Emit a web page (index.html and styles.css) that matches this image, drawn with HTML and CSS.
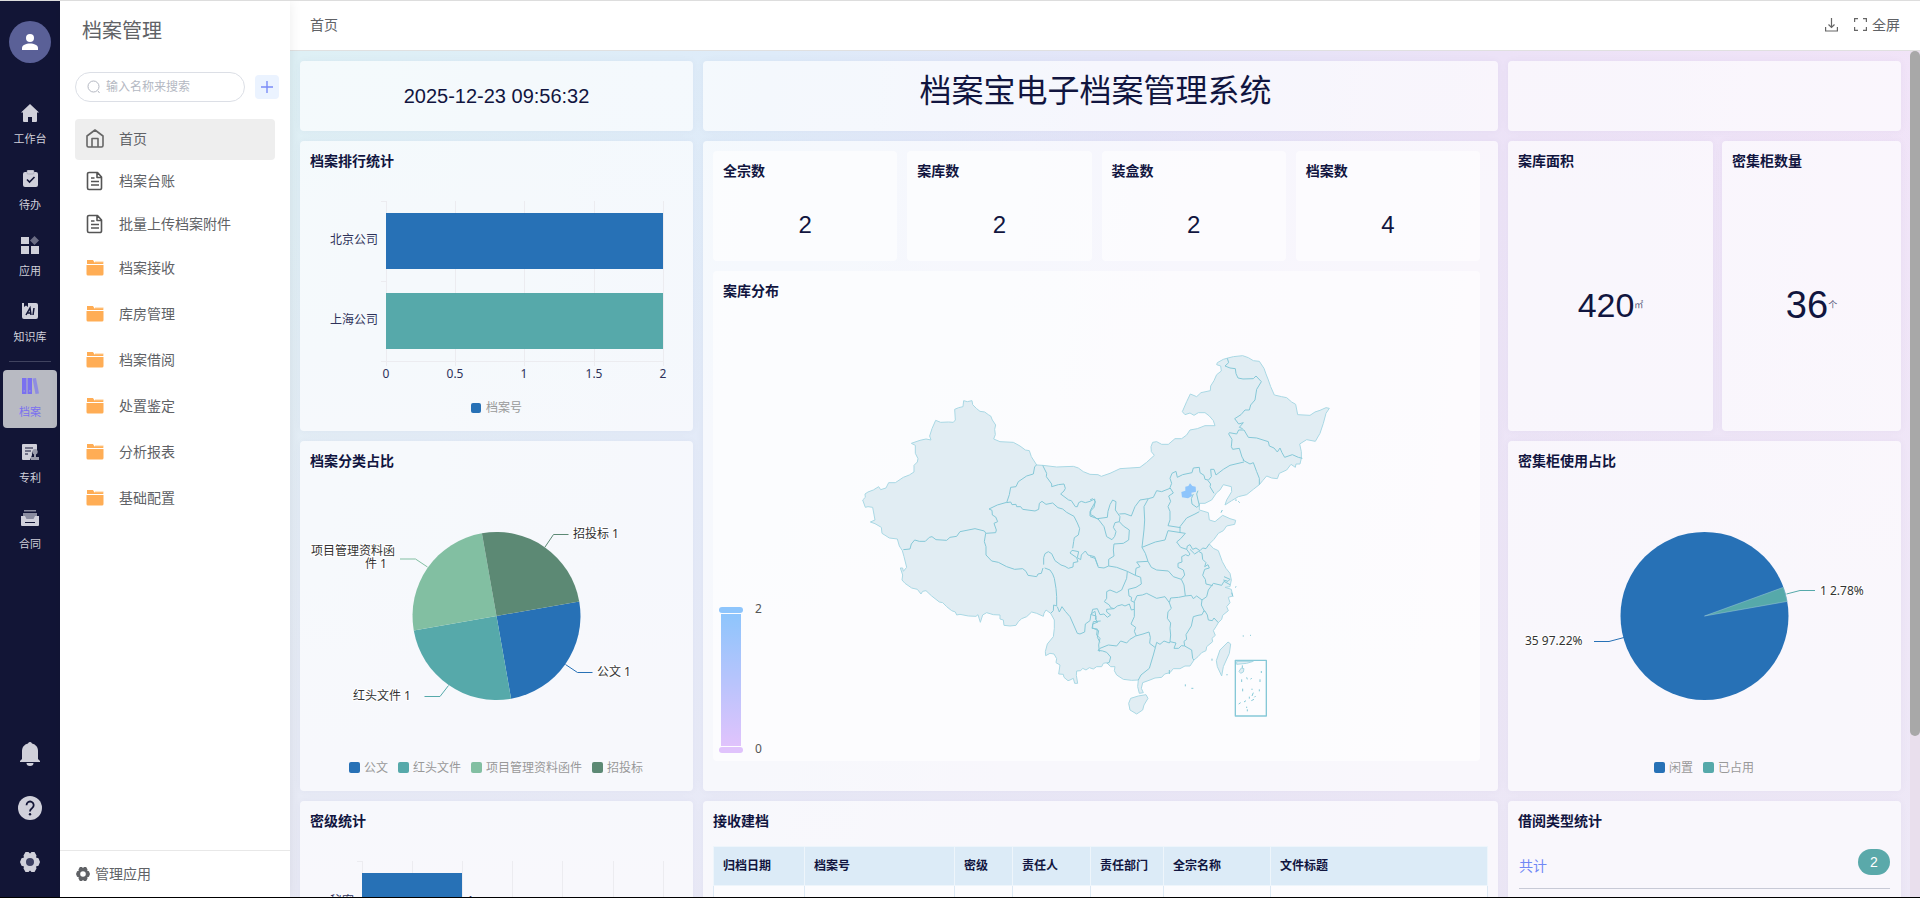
FILE: index.html
```html
<!DOCTYPE html>
<html lang="zh-CN">
<head>
<meta charset="utf-8">
<title>档案宝电子档案管理系统</title>
<link rel="stylesheet" href="styles.css">
</head>
<body>
<svg class="defs" aria-hidden="true">
  <symbol id="i-folder" viewBox="0 0 18 18"><path fill="#ffc98a" d="M9 2.500h8.500V6H9z"/><path fill="#ffad55" d="M1 1h6l1.500 2.500H17v2H1zM.5 5.500h17V15a1.500 1.500 0 0 1-1.500 1.500H2A1.500 1.500 0 0 1 .5 15z"/><path stroke="#fff" d="M0 5.500h18"/></symbol>
  <symbol id="i-doc" viewBox="0 0 18 20"><path fill="none" stroke="#555" stroke-width="1.600" stroke-linejoin="round" d="M3 1.500h8.500l4 4.500v11a1.500 1.500 0 0 1-1.500 1.500H3A1.500 1.500 0 0 1 1.500 17V3A1.500 1.500 0 0 1 3 1.500zM11 2v4.500h4.500M5 7h3.500M5 10.500h8M5 14h8"/></symbol>
  <symbol id="i-gear" viewBox="0 0 20 20"><path fill="currentColor" fill-rule="evenodd" d="M5.500 0h3L10 1.500 11.500 0h3l2 3.500-.5 2 2.500.700L20 10l-1.500 3.800-2.500.700.5 2-2 3.500h-3L10 18.500 8.500 20h-3l-2-3.500.5-2-2.500-.700L0 10l1.500-3.800L4 5.500l-.5-2zM10 6a4 4 0 1 0 0 8 4 4 0 0 0 0-8z"/></symbol>
</svg>
<div class="app">
  <nav class="rail" aria-label="主导航">
    <button class="avatar" aria-label="用户"><svg width="18" height="18" viewBox="0 0 18 18"><circle cx="9" cy="5" r="4" fill="#fff"/><path fill="#fff" d="M1 17v-2c0-3 4-4.500 8-4.500s8 1.500 8 4.500v2z"/></svg></button>
    <div class="rail-list">
      <a class="rail-item" href="#"><svg width="18" height="18" viewBox="0 0 18 18"><path fill="currentColor" d="M9 0l9 8.500h-2V17a1 1 0 0 1-1 1h-4v-5H7v5H3a1 1 0 0 1-1-1V8.500H0z"/></svg><span>工作台</span></a>
      <a class="rail-item" href="#"><svg width="18" height="18" viewBox="0 0 18 18"><rect x="2" y="2" width="15" height="15" rx="2" fill="currentColor"/><rect x="6" y="0" width="7" height="4" rx="1" fill="currentColor" stroke="#8a8c9f" stroke-width=".5"/><path d="M6 9.500l2.500 2.500 5-5" fill="none" stroke="#121536" stroke-width="1.600"/></svg><span>待办</span></a>
      <a class="rail-item" href="#"><svg width="18" height="18" viewBox="0 0 18 18"><path fill="currentColor" d="M0 1h8v7H0zM0 10h8v8H0zM10 10h8v8h-8z"/><path fill="#6b6d84" d="M13.500 0L18 4.500 13.500 9 9 4.500z"/></svg><span>应用</span></a>
      <a class="rail-item" href="#"><svg width="18" height="18" viewBox="0 0 18 18"><path fill="currentColor" d="M1 1h2v4l2-1.500L7 5V1h8a2 2 0 0 1 2 2v12a2 2 0 0 1-2 2H3a2 2 0 0 1-2-2z"/><path d="M5 13l4-7 1 7M6.500 11H10M13 6l-1 7" fill="none" stroke="#121536" stroke-width="1.500"/></svg><span>知识库</span></a>
      <hr class="rail-line">
      <a class="rail-item active" href="#"><svg width="18" height="18" viewBox="0 0 18 18"><path fill="currentColor" d="M1 1h4.500v16H1zM6.500 1H11v16H6.500z"/><path fill="#8f8de0" d="M11.500 1.500l3.500-.5 3 15.500-3.500.5z"/><path stroke="#b8bac2" d="M2.500 14h1.500M8 14h1.500" stroke-width=".8"/></svg><span>档案</span></a>
      <a class="rail-item" href="#"><svg width="18" height="18" viewBox="0 0 18 18"><path fill="currentColor" d="M2 1h13a1 1 0 0 1 1 1v5a4 4 0 0 0-5 5l-2 5H2a1 1 0 0 1-1-1V2a1 1 0 0 1 1-1z"/><path d="M4 5h8M4 8h6M4 11h3" stroke="#121536"/><path fill="#9a9bab" d="M14 6a2.800 2.800 0 0 1 1 5.400V14h3v3h-8v-3h3v-2.600A2.800 2.800 0 0 1 14 6z"/></svg><span>专利</span></a>
      <a class="rail-item" href="#"><svg width="18" height="18" viewBox="0 0 18 18"><path fill="#8a8c9f" d="M3 1h12v1.500H3zM2 4h14v6H2z"/><path fill="currentColor" d="M0 7h4l1.500 3h7L14 7h4v9a1 1 0 0 1-1 1H1a1 1 0 0 1-1-1z"/><path d="M4 13.500h10" stroke="#121536"/></svg><span>合同</span></a>
    </div>
    <div class="rail-tools">
      <button aria-label="通知"><svg width="20" height="24" viewBox="0 0 20 24"><path fill="currentColor" d="M10 0a2 2 0 0 1 2 1.500c4 1 6 4 6 7.500v8l2 2v1H0v-1l2-2V9c0-3.500 2-6.500 6-7.500A2 2 0 0 1 10 0zM6.500 21h7a3.500 3 0 0 1-7 0z"/></svg></button>
      <button aria-label="帮助"><svg width="24" height="24" viewBox="0 0 24 24"><circle cx="12" cy="12" r="12" fill="currentColor"/><path d="M8.500 9.200a3.600 3.600 0 1 1 5.500 3c-1.400.9-2 1.600-2 3.300" fill="none" stroke="#121536" stroke-width="1.800"/><circle cx="12" cy="18.300" r="1.200" fill="#121536"/></svg></button>
      <button aria-label="设置"><svg width="20" height="20"><circle cx="10" cy="10" r="6" fill="#3d4062"/><use href="#i-gear"/></svg></button>
    </div>
  </nav>

  <aside class="side">
    <h2 class="side-title">档案管理</h2>
    <div class="side-search">
      <label class="search-box"><svg width="14" height="14" viewBox="0 0 14 14"><path fill="none" stroke="#b4b8c2" d="M11 11l1.500 2M6.500 1a5.500 5.500 0 1 0 0 11 5.500 5.500 0 0 0 0-11z"/></svg><input type="text" placeholder="输入名称来搜索" aria-label="搜索"></label>
      <button class="add" aria-label="新增"><svg width="14" height="14" viewBox="0 0 14 14"><path d="M7 1v12M1 7h12" stroke="#7b8cf8" stroke-width="1.400"/></svg></button>
    </div>
    <ul class="menu">
      <li><a class="menu-item current" href="#"><svg width="18" height="19" viewBox="0 0 18 19"><path fill="none" stroke="#666" stroke-width="1.600" stroke-linejoin="round" d="M1 7l8-6 8 6v9.500a1.500 1.500 0 0 1-1.500 1.500h-13A1.500 1.500 0 0 1 1 16.500zM6 18V9.500h6V18"/></svg>首页</a></li>
      <li><a class="menu-item page" href="#"><svg width="18" height="20"><use href="#i-doc"/></svg>档案台账</a></li>
      <li><a class="menu-item page" href="#"><svg width="18" height="20"><use href="#i-doc"/></svg>批量上传档案附件</a></li>
      <li><a class="menu-item" href="#"><svg width="18" height="18"><use href="#i-folder"/></svg>档案接收</a></li>
      <li><a class="menu-item" href="#"><svg width="18" height="18"><use href="#i-folder"/></svg>库房管理</a></li>
      <li><a class="menu-item" href="#"><svg width="18" height="18"><use href="#i-folder"/></svg>档案借阅</a></li>
      <li><a class="menu-item" href="#"><svg width="18" height="18"><use href="#i-folder"/></svg>处置鉴定</a></li>
      <li><a class="menu-item" href="#"><svg width="18" height="18"><use href="#i-folder"/></svg>分析报表</a></li>
      <li><a class="menu-item" href="#"><svg width="18" height="18"><use href="#i-folder"/></svg>基础配置</a></li>
    </ul>
    <button class="side-foot"><svg width="14" height="14"><use href="#i-gear"/></svg>管理应用</button>
  </aside>

  <main class="main">
    <header class="top">
      <span>首页</span>
      <div class="top-tools">
        <button aria-label="下载"><svg width="13" height="14" viewBox="0 0 13 14"><path fill="none" stroke="#666" stroke-width="1.200" d="M6.500 0v9M3.500 6.500l3 3 3-3M.6 9v4h11.800V9"/></svg></button>
        <button><svg width="13" height="13" viewBox="0 0 13 13"><path fill="none" stroke="#666" stroke-width="1.200" d="M.6 4V.6H4M9 .6h3.400V4M12.400 9v3.400H9M4 12.400H.6V9"/></svg>全屏</button>
      </div>
    </header>
    <div class="scroller">
    <div class="board">
      <section class="card clock">2025-12-23 09:56:32</section>
      <section class="card headline"><h1>档案宝电子档案管理系统</h1></section>
      <section class="card"></section>

      <section class="card">
        <h3>档案排行统计</h3>
        <svg class="chart" viewBox="0 0 393 260" role="img" aria-label="档案排行统计">
          <path class="axis" d="M86.500 30v165M155.500 30v165M224.500 30v165M294.500 30v165M363.500 30v165M81 30.500h5M81 110.500h5M81 190.500h282"/>
          <path fill="#2771b6" d="M86 42h277v56H86z"/><path fill="#56a9aa" d="M86 122h277v56H86z"/>
          <g class="axis-text"><g text-anchor="end"><text x="78" y="73">北京公司</text><text x="78" y="153">上海公司</text></g>
          <g text-anchor="middle"><text x="86" y="207">0</text><text x="155" y="207">0.5</text><text x="224" y="207">1</text><text x="294" y="207">1.5</text><text x="363" y="207">2</text></g></g>
          <rect x="171" y="232" width="10" height="10" rx="2" fill="#2771b6"/><text class="legend" x="186" y="241">档案号</text>
        </svg>
      </section>

      <section class="card center">
        <div class="stats">
          <div class="stat"><h3>全宗数</h3><b>2</b></div>
          <div class="stat"><h3>案库数</h3><b>2</b></div>
          <div class="stat"><h3>装盒数</h3><b>2</b></div>
          <div class="stat"><h3>档案数</h3><b>4</b></div>
        </div>
        <div class="stat map">
          <h3>案库分布</h3>
          <svg class="chart" viewBox="0 0 767 460" role="img" aria-label="案库分布">
            <defs><linearGradient id="ramp" x1="0" y1="0" x2="0" y2="1"><stop offset="0" stop-color="#8ec5fc"/><stop offset="1" stop-color="#e0c3fc"/></linearGradient></defs>
            <rect x="6" y="306" width="24" height="6" rx="3" fill="#8ec5fc"/><rect x="8" y="313" width="20" height="132" fill="url(#ramp)"/><rect x="6" y="446" width="24" height="6" rx="3" fill="#e0c3fc"/>
            <text class="ramp-text" x="42" y="312">2</text><text class="ramp-text" x="42" y="452">0</text>
            <g transform="translate(127 39) scale(.33333)">
              <path class="land" d="M68 480L76 472 75 462 84 456 100 450 116 440 122 449 138 444 146 428 166 428 190 412 208 405 222 396 222 376 232 366 234 356 226 340 226 316 214 310 240 301 258 297 273 300 269 288 276 266 287 241 302 247 326 246 340 247 346 240 344 208 356 203 369 200 371 182 382 185 396 182 398 194 410 206 420 214 434 216 445 224 452 228 457 240 467 255 464 268 466 284 461 297 480 305 520 307 540 318 556 330 568 332 574 350 590 375 608 376 650 381 700 379 715 384 730 395 750 403 774 404 784 409 810 400 840 386 870 384 900 382 920 367 943 346 934 335 933 320 938 307 950 305 965 313 985 313 1005 296 1025 296 1040 285 1050 270 1072 266 1095 257 1125 257 1120 242 1108 228 1095 218 1075 218 1062 226 1050 219 1035 224 1027 215 1040 185 1051 162 1070 170 1083 158 1111 152 1112 138 1122 122 1130 104 1144 93 1142 78 1130 74 1132 68 1150 58 1164 54 1180 50 1208 47 1225 53 1240 62 1258 64 1272 85 1278 102 1285 120 1292 140 1303 165 1325 170 1340 173 1355 186 1367 193 1373 224 1410 226 1425 216 1440 211 1458 203 1468 205 1458 220 1450 250 1440 280 1426 304 1400 299 1379 312 1384 335 1384 355 1380 372 1368 372 1366 382 1353 373 1340 390 1318 400 1312 416 1295 414 1280 408 1268 422 1258 434 1240 448 1220 464 1195 470 1175 482 1155 495 1160 480 1175 455 1174 440 1150 434 1140 450 1130 458 1115 480 1095 490 1078 490 1078 510 1105 518 1108 540 1125 545 1148 526 1170 536 1187 541 1184 553 1160 558 1150 572 1135 580 1122 598 1108 612 1120 625 1135 632 1147 665 1158 685 1170 700 1174 720 1170 740 1155 742 1174 748 1178 768 1165 772 1170 788 1160 800 1165 812 1148 826 1145 838 1135 848 1128 860 1120 872 1126 886 1116 895 1118 905 1100 920 1098 932 1085 938 1074 950 1062 960 1050 978 1035 978 1020 986 1000 986 990 998 974 1002 965 1012 945 1014 930 1020 908 1028 904 1045 910 1058 898 1060 893 1040 895 1020 875 1021 850 1018 830 1005 823 992 825 980 812 980 800 968 790 970 785 980 770 980 760 987 748 983 738 990 728 985 722 992 710 993 709 1006 713 1030 704 1030 700 1015 690 1020 684 1022 672 1012 670 1003 656 1002 660 975 648 968 650 956 642 942 630 940 617 947 616 935 622 912 640 890 643 865 643 840 632 820 618 810 612 820 610 829 590 820 575 816 560 830 545 836 535 845 528 856 510 858 492 856 490 840 480 837 480 825 460 824 440 818 428 825 421 847 414 824 408 829 385 828 360 823 350 825 346 816 335 812 320 800 308 788 298 786 275 768 258 752 248 754 243 762 232 748 215 744 195 730 186 720 188 705 181 684 188 684 190 694 200 682 192 650 187 632 178 618 172 597 148 594 126 580 124 562 105 551 91 546 105 540 98 502 84 500 76 502z"/>
              <g class="border">
                <path d="M190 629l20-2 4-15 10-12 14 4h18l12-12 8-2 12 9 32 2 10-9 20-3 10-14 45-9 28 7 4 6M437 580l30-2 2-8-7-20 11-5-6-14-10-6-1-14-9-4 25-12 28-8M500 488l8-24 4-22 16-2 7-15 25-17 20-6 4-22 6-5M500 488l12-2 4 8 12-1 2 7 12 0 6 8 37 5 11-5 2-18 8-6 12 9 20-4 16 14 14 4 12 10 22 12 10 20 7 17-4 19-12 8-2 12-3 20M716 635l-20-4-6 8 20 14 4 12-14 3-1 13-14 4-10-6-12-4-18-13-10-21-10-6-10 6-4 12v21M437 580l-4 25 5 15v25l17 18 20 4 25 13 24 8 24-2 10 8 6 12 26 4 4-8 10-2 5-16M614 684l16 6 8 12 5 13 5 30 2 25v28l-9-3-1 17-8 8M608 376l12 24-1 10 16 22v8l20-6 17-2 4 13-4 8-10 9 24 18 8 2 12 18h6l4-12 8-4 12 4 14-4 14-7 1 10-13 23v14l12 6 8 8M716 635l-4 18 10 6 2-14 12-12 8 12 20 5 10 28M652 800l6 16 8-16 10 14 14 16 22 50 8 2 14-6 2-24 14-10 3-20 12-8 4 25M782 843l-22 2-4 20 16 2-2 18 10 10-4 20 2 20"/>
              </g>
              <g class="border" transform="translate(750 0)">
                <path d="M412 55l4 13-11 10 15 6 16 2 2 15 6 13 15 3 31-1 8-8 16 17-14 23-5 32-13 15-4 15-13 0-12 14-19 12 12 16 14-4-12 14 10 4M446 270h16l13 22 25 2 35 11 3 13 14 6 10 12 8-12 6 14 8 14 23-8 18 8 12 3M446 270l-6 12-22-4-2 4 10 16-2 22 4 8 20-3 8 26 6 10M458 360l22 12 10-4 10 27 8 20v19M462 366l-42 10-20 12-22 17-6-17h-10l2 22-10 12 8 10-2 8 12 20M354 420l-9-2-3-12-12-8-2-16-18 2-4 14-28 6-16 8-4-18-12 6-6 15 5 15-5 13 10 16-14 9 6 16-8 16 6 14v26l-6 17 38 6M270 578v-18l20-26 25-12 13-7M310 462l-6 14 2 16 14 10 8-6-4-16-4-18 4-10M240 445l-25 10-15-3-10 20-15 4-25 4-15 20-4 10-7 18-19-7-17 1M22 536l30-4 2-18 6-20 8-14 10 5-2 25 14 20-2 15-13 3-5 14 8 13-4 14-8 10-16-9-8-30-20-26M88 545l12 13 18 12-2 30-16 10-28 2-2 18 2 18-16 10v20M0 480l8-4 8 8-4 18-12 13v13l22 8M175 476l-13 24 2 40-2 30-6 52M156 622l40-16 29-6 9-28M156 622l10 18 8 24M174 664l-34 2 10 14-12 5-2 21-24-12M112 694l-32-12-24-4-14 6-17-2-10-27-15-5M174 664l10 18 16 8 35 3 15 17 24 8M274 718l10-13-4-15-16-8v-12l12-4-1-16 12-6 8 4 5-6-10-14M234 572l52 8-14 16-12 10 12 16 18 6M290 628l2-10 8-4 8 14 10-4 12 8 8-8 10 2 10-14M300 628l14 14 12-8 10 6 2 18 10 10-4 12 10-6 4 10-14 4-6 18 8 12 2 14 20 5M370 730l25 6 7-12 18 10M402 710l18 8-6 6-14-4M274 718l8 17 4 33 18-2 6 10 10-8 16 12M336 780l14-10 5-20 15-20M336 780l-2 15 10 20M344 812l8 13 3 15 12 2 5-8 13 14M342 812l-6 12-12 2-14 4-6 28-16 26 2 14-8 6 2 14M136 706l16 6 2 20-16 10-23 6 2 20 8 4-2 10 10 5M133 785l8-18 16-2 13-5 30 15 25-5 13 18M238 788l4-14 24-2 20-4M238 788l6 17-10 10-2 20 10 14-2 16 2 20-2 20M133 785v45l-10 22 14 10-4 12 6 14M112 694l-2 21-15 35-15 8-20-8-10 5v20l-7 10 15 10 4 8 10 3M72 806l10-8 14-4 9 4 13-6 6 18 8-2M72 806l-22 2v8l12 9-10 7-10-10-12 2-8-18-14 2-4 16 14 4-2 10 8 8-16 6v12l18 8-4 20 8 15M30 925l25-10 25 3 12-15 18 6 10-11 17-10M137 888l22-6 18-6 4 16-2 18 17 13M196 923l-6 22-12 40-25 20-8 15M196 923l4-16 10 6 12-10 16 6 2-4M240 905l18 4-6 16 14 0 8-8 10 1M284 918l21 12 3 25 4 5M30 925l-6 6 14 2 12 4 12 14-4 16-8 3"/>
                <path d="M436 961h93v167h-93z" fill="none" stroke-width="4"/>
                <path d="M455 1018v8M470 1012l2 6M485 1014l-3 4M510 1018v8M458 1046v8M486 1046v4M508 1048v6M490 1058l-4 10M478 1070v6M492 1078l-8 4M468 1082l-6 4M452 1088l-6 4M470 1100v4M472 1108v6M514 993v6M457 976v10M497 1068l-4 4M445 484l4 4M438 478v5M397 510l-4 8M286 1033v6M304 1045h6M458 888h4M480 886h3M366 956v6M411 1002v4M435 742l4-2M425 758l4 12M238 990v12" stroke-width="3"/>
              </g>
              <path class="land" d="M872 1075l23-7 23-4 6 11-12 20-4 15-18 12-20-12-4-20zM1164 906l8 6-4 28-18 40-5 28-13-28-3-18 11-32zM1190 964h50l-20 6-30 3zM1204 984l8 2-2 10-8 4-5-6z"/>
              <path fill="#8ec5fc" d="M1050 430l-5 8-9 2v12l-12 4 2 16 18 3 12-7-2-10 14-3-1-15-10-2z"/>
            </g>
          </svg>
        </div>
      </section>

      <div class="pair">
        <section class="card"><h3>案库面积</h3><p class="figure area">420<small>㎡</small></p></section>
        <section class="card"><h3>密集柜数量</h3><p class="figure">36<small>个</small></p></section>
      </div>

      <section class="card">
        <h3>档案分类占比</h3>
        <svg class="chart" viewBox="0 0 393 320" role="img" aria-label="档案分类占比">
          <g transform="translate(196.500 145) rotate(-10)"><path fill="#2771b6" d="M0 0h84A84 84 0 0 1 0 84z"/><path fill="#56a9aa" d="M0 0v84A84 84 0 0 1-84 0z"/><path fill="#82bfa2" d="M0 0h-84A84 84 0 0 1 0-84z"/><path fill="#5c8974" d="M0 0v-84A84 84 0 0 1 84 0z"/></g>
          <g fill="none"><path stroke="#5c8974" d="M245 76l8.500-12.500h15"/><path stroke="#2771b6" d="M265.500 193.500l12 8h15"/><path stroke="#56a9aa" d="M148.500 214.500l-8.500 11h-15.500"/><path stroke="#82bfa2" d="M127.500 96l-12-8H100"/></g>
          <g class="label"><text x="273" y="67">招投标 1</text><text x="297" y="205">公文 1</text><text x="53" y="229">红头文件 1</text><text x="11" y="84">项目管理资料函</text><text x="65" y="97">件 1</text></g>
          <rect x="49" y="291" width="11" height="11" rx="2" fill="#2771b6"/><rect x="98" y="291" width="11" height="11" rx="2" fill="#56a9aa"/><rect x="171" y="291" width="11" height="11" rx="2" fill="#82bfa2"/><rect x="292" y="291" width="11" height="11" rx="2" fill="#5c8974"/>
          <g class="legend"><text x="64" y="301">公文</text><text x="113" y="301">红头文件</text><text x="186" y="301">项目管理资料函件</text><text x="307" y="301">招投标</text></g>
        </svg>
      </section>

      <section class="card">
        <h3>密集柜使用占比</h3>
        <svg class="chart" viewBox="0 0 393 320" role="img" aria-label="密集柜使用占比">
          <circle cx="196.500" cy="145" r="84" fill="#2771b6"/><path fill="#56a9aa" stroke="#9fc9d8" stroke-width=".5" d="M196.500 145l82.700-14.600a84 84 0 0 0-3.800-14.100z"/>
          <g fill="none"><path stroke="#56a9aa" d="M278.500 123l13.500-3.500h15"/><path stroke="#2771b6" d="M116 166.500l-15 4H86"/></g>
          <g class="label"><text x="312" y="124">1 2.78%</text><text x="17" y="174">35 97.22%</text></g>
          <rect x="146" y="291" width="11" height="11" rx="2" fill="#2771b6"/><rect x="195" y="291" width="11" height="11" rx="2" fill="#56a9aa"/>
          <g class="legend"><text x="161" y="301">闲置</text><text x="210" y="301">已占用</text></g>
        </svg>
      </section>

      <section class="card">
        <h3>密级统计</h3>
        <svg class="chart" viewBox="0 0 393 260" role="img" aria-label="密级统计">
          <path class="axis" d="M62.500 30v165M112.500 30v165M162.500 30v165M212.500 30v165M262.500 30v165M313.500 30v165M363.500 30v165M57 30.500h5"/>
          <path fill="#2771b6" d="M62 42h100v56H62z"/>
          <g class="axis-text"><text x="30" y="74">秘密</text><text x="167" y="74">1</text></g>
        </svg>
      </section>

      <section class="card">
        <h3>接收建档</h3>
        <table class="records">
          <colgroup><col class="w-date"><col class="w-no"><col class="w-level"><col class="w-owner"><col class="w-dept"><col class="w-fonds"><col></colgroup>
          <thead><tr><th>归档日期</th><th>档案号</th><th>密级</th><th>责任人</th><th>责任部门</th><th>全宗名称</th><th>文件标题</th></tr></thead>
          <tbody><tr><td></td><td></td><td></td><td></td><td></td><td></td><td></td></tr></tbody>
        </table>
      </section>

      <section class="card">
        <h3>借阅类型统计</h3>
        <div class="total"><a href="#">共计</a><span>2</span></div>
      </section>
    </div>
    <div class="track"><div class="thumb"></div></div>
    </div>
  </main>
</div>
</body>
</html>
```

FILE: styles.css
```css
* { box-sizing: border-box; }
body {
  margin: 0;
  font: 14px/20px "Liberation Sans", "Noto Sans CJK SC", sans-serif;
  color: #606266;
}
h1, h2, h3, p, ul { margin: 0; padding: 0; font-weight: 400; }
button { border: 0; padding: 0; background: none; font: inherit; color: inherit; cursor: pointer; }
a { color: inherit; text-decoration: none; }
svg { display: block; flex: none; }
.defs { display: none; }

.app {
  display: flex;
  height: 100vh;
  border-top: 1px solid #ddd;
  border-bottom: 1px solid #000;
  overflow: hidden;
}

.rail {
  flex: none;
  width: 60px;
  display: flex;
  flex-direction: column;
  align-items: center;
  padding: 20px 0 23px;
  background: #121536;
  color: #d0d0da;
}
.avatar {
  flex: none;
  width: 42px;
  height: 42px;
  border-radius: 50%;
  background: #5a6097;
  display: grid;
  place-items: center;
}
.rail-list { display: flex; flex-direction: column; gap: 8px; margin-top: 34px; }
.rail-item {
  width: 54px;
  height: 58px;
  padding-top: 7px;
  border-radius: 4px;
  display: flex;
  flex-direction: column;
  align-items: center;
  gap: 8px;
  font-size: 11px;
  line-height: 18px;
}
.rail-item.active { background: #b8bac2; color: #7a70f0; }
.rail-line { width: 42px; height: 1px; margin: 0 auto; border: 0; background: #40435f; }
.rail-tools { margin-top: auto; display: flex; flex-direction: column; align-items: center; gap: 30px; }
.rail-tools button { width: 24px; height: 24px; display: grid; place-items: center; }

.side {
  flex: none;
  width: 230px;
  display: flex;
  flex-direction: column;
  background: #fff;
  box-shadow: 0 0 12px rgba(0, 0, 0, .08);
  z-index: 1;
}
.side-title { padding: 15px 22px 0; font-size: 20px; line-height: 30px; }
.side-search { display: flex; align-items: center; gap: 10px; padding: 26px 10px 17px 15px; }
.search-box {
  width: 170px;
  height: 30px;
  display: flex;
  align-items: center;
  gap: 5px;
  padding: 0 11px;
  border: 1px solid #dcdfe6;
  border-radius: 15px;
}
.search-box input { width: 100%; min-width: 0; padding: 0; border: 0; outline: 0; background: none; font: 12px/20px "Liberation Sans", "Noto Sans CJK SC", sans-serif; }
.search-box input::placeholder { color: #b4b8c2; }
.add { width: 24px; height: 24px; border-radius: 4px; background: #ebf3ff; display: grid; place-items: center; }
.menu { list-style: none; padding: 0 15px; }
.menu-item { display: flex; align-items: center; gap: 15px; height: 46px; padding: 0 0 2px 11px; }
.menu-item.page { height: 43px; }
.menu-item.current { height: 41px; border-radius: 4px; background: #eee; }
.side-foot { margin-top: auto; height: 47px; display: flex; align-items: center; gap: 5px; padding-left: 16px; border-top: 1px solid #e8e8e8; }

.main { flex: 1; min-width: 0; display: flex; flex-direction: column; }
.top { flex: none; height: 50px; display: flex; align-items: center; justify-content: space-between; padding: 0 20px 2px; background: #fff; border-bottom: 1px solid #e0e0e0; }
.top-tools, .top-tools button { display: flex; align-items: center; }
.top-tools { gap: 16px; }
.top-tools button { gap: 5px; }

.scroller { flex: 1; min-height: 0; display: flex; overflow: hidden; }
.track { flex: none; width: 10px; background: #e9dfed; }
.thumb { height: 81%; border-radius: 5px; background: #a8a8a8; }
.board {
  flex: 1;
  min-width: 0;
  display: grid;
  grid-template-columns: 393fr 795fr 393fr;
  grid-template-rows: 70px minmax(290px, auto) minmax(350px, auto) 300px;
  align-content: start;
  gap: 10px;
  padding: 10px 9px 0 10px;
  background:
    linear-gradient(180deg, rgba(238, 234, 246, 0) 0, rgba(236, 233, 246, .8) 100%),
    linear-gradient(97deg, #def0f5 0, #deebf9 28%, #e4e4f8 50%, #ece2f7 70%, #f2e4f8 100%);
  overflow: hidden;
}
.card { min-width: 0; padding-top: 10px; border-radius: 4px; background: rgba(255, 255, 255, .66); box-shadow: 0 0 8px rgba(60, 60, 90, .04); color: #11153f; }
.card h3 { padding: 0 10px; font-weight: 600; font-size: 14px; line-height: 20px; }
.clock { display: grid; place-items: center; padding: 0; font-size: 20px; }
.headline { padding: 8px 10px 0 0; text-align: center; }
.headline h1 { font-size: 32px; line-height: 44px; }
.chart { width: 100%; height: auto; font: 12px "Noto Sans", "Noto Sans CJK SC", sans-serif; }
.axis { fill: none; stroke: #ececf0; }
.axis-text { fill: #2e325a; }
.legend { fill: #999; }
.ramp-text { fill: #555; }
.label { fill: #333; stroke: #fff; stroke-width: 2px; paint-order: stroke; }

.center { grid-row: span 2; padding: 10px 18px 30px 10px; }
.stats { display: grid; grid-template-columns: repeat(4, 1fr); gap: 10px; margin-bottom: 10px; }
.stat { padding-top: 10px; border-radius: 4px; background: rgba(255, 255, 255, .6); }
.stat b { display: block; padding: 32px 0 24px; font-weight: 400; font-size: 24px; line-height: 24px; text-align: center; }
.land { fill: #e1edf3; stroke: #a9d8e4; stroke-width: 3; stroke-linejoin: round; }
.border { fill: none; stroke: #85c8d7; stroke-width: 3; stroke-linejoin: round; }

.pair { display: grid; grid-template-columns: 205fr 179fr; gap: 9px; }
.pair .card { display: flex; flex-direction: column; }
.figure { flex: 1; display: flex; align-items: center; justify-content: center; padding-top: 8px; font-size: 38px; line-height: 40px; }
.figure.area { font-size: 34px; }
.figure small { font-size: 9px; line-height: 12px; color: #555878; }

.records { width: calc(100% - 20px); margin: 15px 10px 0; border-collapse: collapse; table-layout: fixed; font-size: 12px; }
.records th { height: 39px; padding: 0 9px; border: 1px solid #eef5fb; background: #dcebf7; font-weight: 600; text-align: left; }
.records td { height: 39px; border: 1px solid #dde9f4; background: rgba(255, 255, 255, .6); }
.w-date { width: 91px; }
.w-no { width: 150px; }
.w-level { width: 58px; }
.w-owner { width: 78px; }
.w-dept { width: 73px; }
.w-fonds { width: 107px; }

.total { display: flex; align-items: center; justify-content: space-between; margin: 14px 11px 0; padding: 3px 0 12px; border-bottom: 1px solid #c8cad6; color: #7088f5; }
.total a { padding-top: 8px; }
.total span { width: 32px; height: 26px; border-radius: 13px; background: #5aa9aa; color: #fff; line-height: 26px; text-align: center; }
```
